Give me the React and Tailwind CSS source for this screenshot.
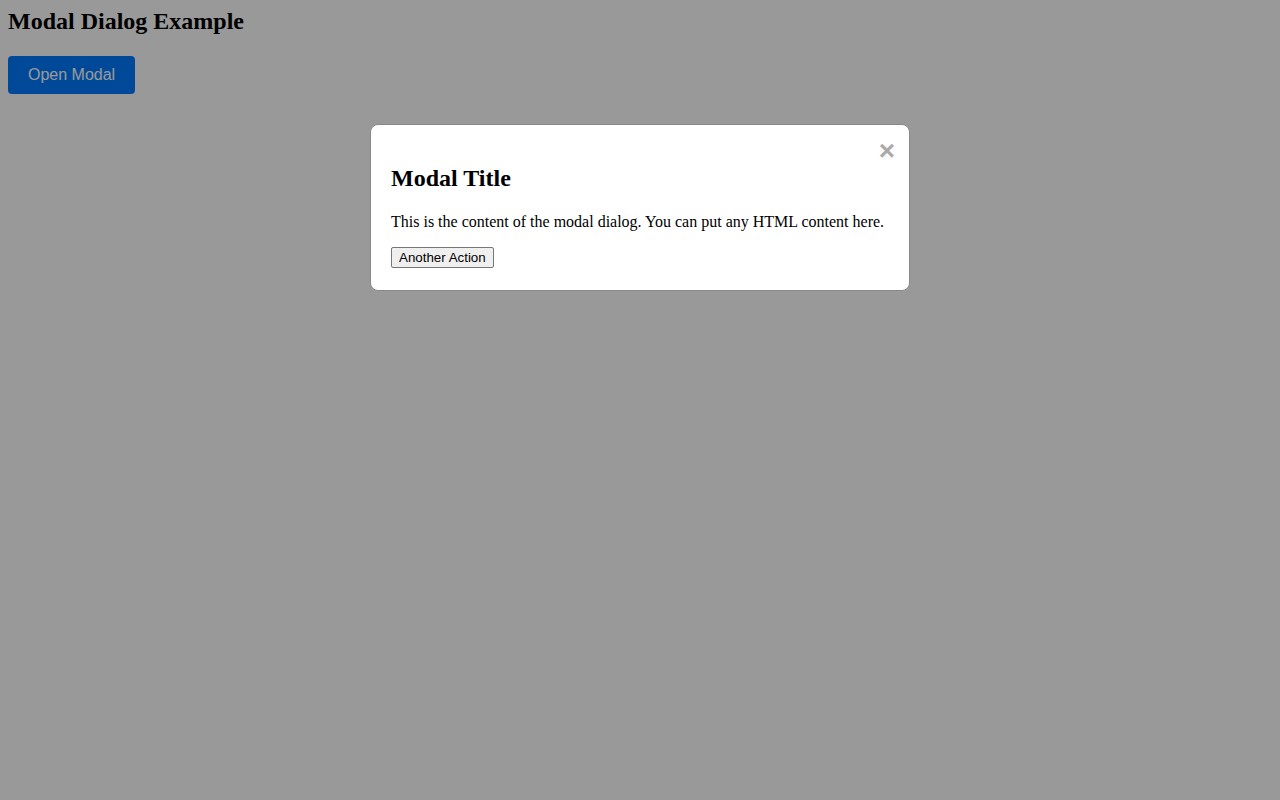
import React, { useState } from 'react';

function Modal({ open, onClose }) {
  if (!open) return null;

  return (
    <div className="fixed inset-0 z-10 flex justify-center bg-black/40 pt-[124px]">
      <div className="relative h-fit w-[540px] rounded-lg border border-[#888] bg-white px-5 pt-5 pb-[22px]">
        {/* Close control */}
        <button
          onClick={onClose}
          className="absolute right-[14px] top-[10px] cursor-pointer font-['Liberation_Sans',Arial,sans-serif] text-[28px] font-bold leading-[32px] text-[#aaa] hover:text-black"
        >
          ×
        </button>

        <h2 className="mt-5 mb-5 text-2xl font-bold leading-[27.6px]">Modal Title</h2>
        <p className="mb-4 text-base leading-[18.4px]">
          This is the content of the modal dialog. You can put any HTML content here.
        </p>
        <button className="block rounded-[2px] border border-[#767676] bg-[#efefef] px-[7px] py-[2px] font-['Liberation_Sans',Arial,sans-serif] text-[13.333px] leading-[15px] text-black">
          Another Action
        </button>
      </div>
    </div>
  );
}

export default function App() {
  const [open, setOpen] = useState(true);

  return (
    <div className="min-h-screen bg-white p-2 font-['Liberation_Serif','Times_New_Roman',serif] text-black">
      <h2 className="mb-5 text-2xl font-bold leading-[27.6px]">Modal Dialog Example</h2>
      <button
        onClick={() => setOpen(true)}
        className="rounded bg-[#007bff] px-5 py-[10px] font-['Liberation_Sans',Arial,sans-serif] text-base leading-[18.4px] text-white"
      >
        Open Modal
      </button>

      <Modal open={open} onClose={() => setOpen(false)} />
    </div>
  );
}
